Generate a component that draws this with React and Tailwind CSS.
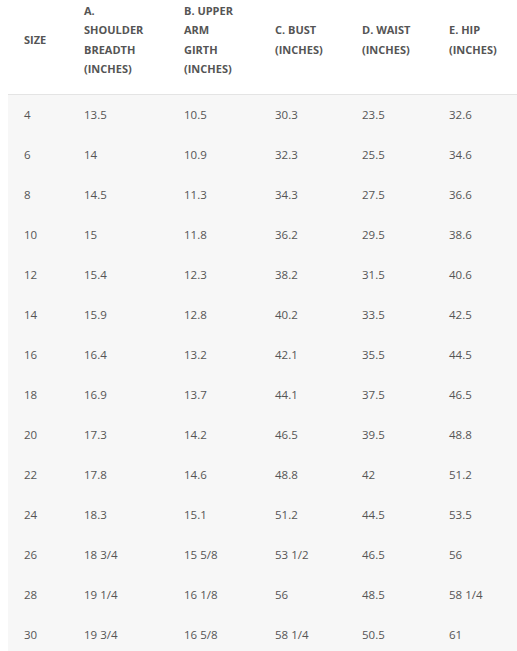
const HEADERS = [
  ["SIZE"],
  ["A.", "SHOULDER", "BREADTH", "(INCHES)"],
  ["B. UPPER", "ARM", "GIRTH", "(INCHES)"],
  ["C. BUST", "(INCHES)"],
  ["D. WAIST", "(INCHES)"],
  ["E. HIP", "(INCHES)"],
];

const ROWS = [
  ["4", "13.5", "10.5", "30.3", "23.5", "32.6"],
  ["6", "14", "10.9", "32.3", "25.5", "34.6"],
  ["8", "14.5", "11.3", "34.3", "27.5", "36.6"],
  ["10", "15", "11.8", "36.2", "29.5", "38.6"],
  ["12", "15.4", "12.3", "38.2", "31.5", "40.6"],
  ["14", "15.9", "12.8", "40.2", "33.5", "42.5"],
  ["16", "16.4", "13.2", "42.1", "35.5", "44.5"],
  ["18", "16.9", "13.7", "44.1", "37.5", "46.5"],
  ["20", "17.3", "14.2", "46.5", "39.5", "48.8"],
  ["22", "17.8", "14.6", "48.8", "42", "51.2"],
  ["24", "18.3", "15.1", "51.2", "44.5", "53.5"],
  ["26", "18 3/4", "15 5/8", "53 1/2", "46.5", "56"],
  ["28", "19 1/4", "16 1/8", "56", "48.5", "58 1/4"],
  ["30", "19 3/4", "16 5/8", "58 1/4", "50.5", "61"],
];

const WIDTHS = ["w-[60px]", "w-[100px]", "w-[91px]", "w-[87px]", "w-[87px]", "w-[84px]"];

export default function App() {
  return (
    <div className="min-h-screen bg-white pl-2 font-['Open_Sans',sans-serif] text-[#555]">
      {/* Header */}
      <div className="flex h-[95px] items-center border-b border-[#e4e4e4] pb-[15px] pl-4">
        {HEADERS.map((lines, i) => (
          <div key={i} className={`${WIDTHS[i]} shrink-0 text-[11px] font-bold leading-[19.5px]`}>
            {lines.map((l) => (
              <div key={l}>{l}</div>
            ))}
          </div>
        ))}
      </div>

      {/* Body */}
      <div className="bg-[#f7f7f7]">
        {ROWS.map((row) => (
          <div key={row[0]} className="flex h-10 items-center pl-4 text-[11.5px]">
            {row.map((cell, i) => (
              <div key={i} className={`${WIDTHS[i]} shrink-0`}>
                {cell}
              </div>
            ))}
          </div>
        ))}
      </div>
    </div>
  );
}
